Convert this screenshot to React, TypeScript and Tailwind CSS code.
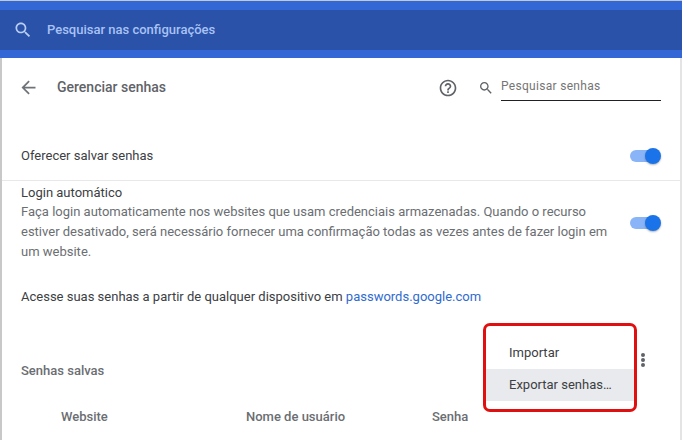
const SEARCH_PATH =
  "M15.5 14h-.79l-.28-.27C15.41 12.59 16 11.11 16 9.5 16 5.91 13.09 3 9.5 3S3 5.91 3 9.5 5.91 16 9.5 16c1.61 0 3.09-.59 4.23-1.57l.27.28v.79l5 4.99L20.49 19l-4.99-5zm-6 0C7.01 14 5 11.99 5 9.5S7.01 5 9.5 5 14 7.01 14 9.5 11.99 14 9.5 14z";
const ARROW_PATH = "M20 11H7.83l5.59-5.59L12 4l-8 8 8 8 1.41-1.41L7.83 13H20v-2z";
const HELP_PATH =
  "M11 18h2v-2h-2v2zm1-16C6.48 2 2 6.48 2 12s4.48 10 10 10 10-4.48 10-10S17.52 2 12 2zm0 18c-4.41 0-8-3.59-8-8s3.59-8 8-8 8 3.59 8 8-3.59 8-8 8zm0-14c-2.21 0-4 1.79-4 4h2c0-1.1.9-2 2-2s2 .9 2 2c0 2-3 1.75-3 5h2c0-2.25 3-2.5 3-5 0-2.21-1.79-4-4-4z";

function Icon({ d, className }: { d: string; className: string }) {
  return (
    <svg viewBox="0 0 24 24" fill="currentColor" className={className}>
      <path d={d} />
    </svg>
  );
}

function Toggle() {
  return (
    <div className="relative h-5 w-[31px] shrink-0">
      <div className="absolute left-0 top-[4px] h-3 w-[28px] rounded-full bg-[#8ab4f8]" />
      <div className="absolute right-0 top-[2px] h-4 w-4 rounded-full bg-[#1a73e8] shadow-[0_1px_2px_rgba(0,0,0,0.3)]" />
    </div>
  );
}

export default function App() {
  return (
    <div className="h-[440px] w-[682px] overflow-hidden bg-white font-['Roboto',sans-serif] text-[13px] text-[#3c4043]">
      <div className="h-[58px] border-t border-[#c4c8d0] bg-[#3367d6] pt-[9px]">
        <div className="flex h-10 items-center bg-[#2a52a8] pl-[13px]">
          <Icon d={SEARCH_PATH} className="h-5 w-5 text-[#b9cdf5]" />
          <span className="ml-[14px] text-[13px] font-medium text-[#a9c2f5]">Pesquisar nas configurações</span>
        </div>
      </div>

      <div className="relative h-[382px] border-x-2 border-l-[#c8c8c8] border-r-[#e4e4e4]">
        <div className="flex h-[59px] items-center pr-[19px]">
          <Icon d={ARROW_PATH} className="ml-[16px] h-[21px] w-[21px] text-[#6f7378]" />
          <span className="ml-[18px] text-[14px] font-medium text-[#5f6368]">Gerenciar senhas</span>
          <Icon d={HELP_PATH} className="ml-auto h-5 w-5 text-[#5f6368]" />
          <Icon d={SEARCH_PATH} className="ml-[20px] h-4 w-4 text-[#5f6368]" />
          <div className="ml-[7px] flex h-[27px] w-[160px] items-center border-b border-[#202124] pb-[2px] text-[12px] tracking-[0.3px] text-[#757575]">
            Pesquisar senhas
          </div>
        </div>

        <div className="mt-[9px] flex h-[55px] items-center justify-between border-b border-[#e8e8e8] pl-[19px] pr-[19px] pt-[6px]">
          <span>Oferecer salvar senhas</span>
          <Toggle />
        </div>

        <div className="flex items-center justify-between pl-[19px] pr-[19px]">
          <div className="w-[595px] pt-[3px]">
            <div className="leading-[18px]">Login automático</div>
            <p className="leading-5 text-[#6b6e72]">
              Faça login automaticamente nos websites que usam credenciais armazenadas. Quando o recurso estiver desativado, será necessário fornecer uma confirmação todas as vezes antes de fazer login em um website.
            </p>
          </div>
          <div className="mt-[2px]">
            <Toggle />
          </div>
        </div>

        <div className="mt-[25px] pl-[19px] leading-5">
          Acesse suas senhas a partir de qualquer dispositivo em <span className="text-[#2f6bd0]">passwords.google.com</span>
        </div>

        <div className="mt-[54px] pl-[19px] font-medium text-[#6b6e72]">Senhas salvas</div>

        <div className="mt-[26px] flex text-[13px] font-medium text-[#6b6e72]">
          <span className="ml-[59px] w-[185px]">Website</span>
          <span className="w-[186px]">Nome de usuário</span>
          <span>Senha</span>
        </div>

        <div className="absolute left-[639px] top-[295px] flex flex-col gap-px">
          <div className="h-1 w-1 rounded-full bg-[#5f6368]" />
          <div className="h-1 w-1 rounded-full bg-[#5f6368]" />
          <div className="h-1 w-1 rounded-full bg-[#5f6368]" />
        </div>

        <div className="absolute left-[481px] top-[265px] h-[89px] w-[154px] rounded-[7px] border-[3px] border-[#e01010] bg-white py-[11px]">
          <div className="flex h-8 items-center pl-[23px] text-[13px]">Importar</div>
          <div className="flex h-8 items-center bg-[#e8eaed] pl-[23px] text-[13px]">Exportar senhas…</div>
        </div>
      </div>
    </div>
  );
}
